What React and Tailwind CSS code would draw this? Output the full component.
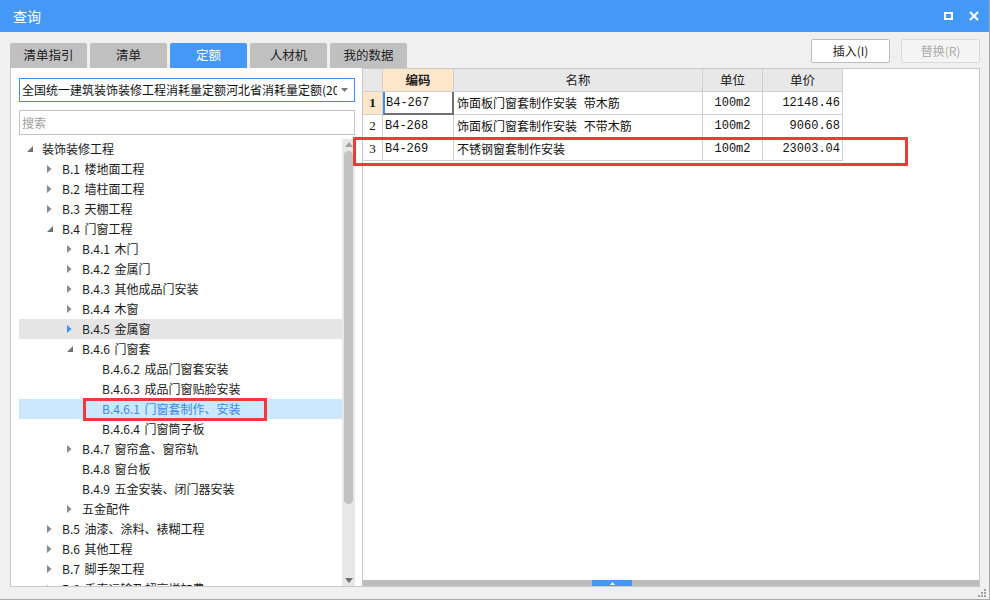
import React from 'react';

const cjk = { fontFamily: '"Noto Sans CJK SC", "Microsoft YaHei", sans-serif' };
const mono = { fontFamily: '"Liberation Mono", monospace' };

const tabs = ['清单指引', '清单', '定额', '人材机', '我的数据'];

// level, label, state: 'c' collapsed, 'e' expanded, '' leaf
const tree = [
  [0, '装饰装修工程', 'e'],
  [1, 'B.1 楼地面工程', 'c'],
  [1, 'B.2 墙柱面工程', 'c'],
  [1, 'B.3 天棚工程', 'c'],
  [1, 'B.4 门窗工程', 'e'],
  [2, 'B.4.1 木门', 'c'],
  [2, 'B.4.2 金属门', 'c'],
  [2, 'B.4.3 其他成品门安装', 'c'],
  [2, 'B.4.4 木窗', 'c'],
  [2, 'B.4.5 金属窗', 'c', 'hover'],
  [2, 'B.4.6 门窗套', 'e'],
  [3, 'B.4.6.2 成品门窗套安装', ''],
  [3, 'B.4.6.3 成品门窗贴脸安装', ''],
  [3, 'B.4.6.1 门窗套制作、安装', '', 'selected'],
  [3, 'B.4.6.4 门窗筒子板', ''],
  [2, 'B.4.7 窗帘盒、窗帘轨', 'c'],
  [2, 'B.4.8 窗台板', ''],
  [2, 'B.4.9 五金安装、闭门器安装', ''],
  [2, '五金配件', 'c'],
  [1, 'B.5 油漆、涂料、裱糊工程', 'c'],
  [1, 'B.6 其他工程', 'c'],
  [1, 'B.7 脚手架工程', 'c'],
  [1, 'B.8 垂直运输及超高增加费', 'c'],
];

const rows = [
  ['B4-267', '饰面板门窗套制作安装 带木筋', '100m2', '12148.46'],
  ['B4-268', '饰面板门窗套制作安装 不带木筋', '100m2', '9060.68'],
  ['B4-269', '不锈钢窗套制作安装', '100m2', '23003.04'],
];

const Arrow = ({ state, hover }) => {
  if (state === 'c')
    return (
      <svg width="5" height="8" viewBox="0 0 5 8">
        <path d="M0 0 L4.5 4 L0 8 Z" fill={hover ? '#3d8ff0' : '#8a8a8a'} />
      </svg>
    );
  if (state === 'e')
    return (
      <svg width="6" height="6" viewBox="0 0 6 6">
        <path d="M6 0 L6 6 L0 6 Z" fill="#707070" />
      </svg>
    );
  return null;
};

export default function App() {
  return (
    <div className="relative w-[990px] h-[600px] bg-[#f0f0f0] border-r border-b border-[#a8a8a8] flex flex-col overflow-hidden" style={cjk}>
      {/* title bar */}
      <div className="h-[32px] bg-[#4499f8] flex items-center justify-between pl-[13px] pr-[10px] shrink-0">
        <span className="text-white text-[14px]">查询</span>
        <div className="flex items-center gap-[16px]">
          <div className="w-[9px] h-[8px] border-2 border-white" />
          <svg width="10" height="10" viewBox="0 0 10 10">
            <path d="M1 1 L9 9 M9 1 L1 9" stroke="#fff" strokeWidth="2.2" />
          </svg>
        </div>
      </div>

      <div className="flex flex-col pl-[10px] pr-[9px] pt-[7px]">
        {/* tabs + buttons */}
        <div className="flex justify-between h-[29px]">
          <div className="flex gap-[3px] self-end">
            {tabs.map((t) => (
              <div
                key={t}
                className={
                  t === '定额'
                    ? 'w-[77px] h-[25px] flex items-center justify-center rounded-t-[2px] text-[12.5px] bg-[#4499f8] text-white'
                    : 'w-[77px] h-[25px] flex items-center justify-center rounded-t-[2px] text-[12.5px] bg-[#c0c0c0] text-[#222]'
                }
              >
                {t}
              </div>
            ))}
          </div>
          <div className="flex gap-[11px] self-start">
            <div className="w-[79px] h-[24px] bg-white border border-[#bdbdbd] rounded-[2px] flex items-center justify-center text-[12px] text-[#222]">
              插入(I)
            </div>
            <div className="w-[79px] h-[24px] bg-[#f4f4f4] border border-[#dadada] rounded-[2px] flex items-center justify-center text-[12px] text-[#aaaaaa]">
              替换(R)
            </div>
          </div>
        </div>

        {/* content */}
        <div className="flex h-[519px]">
          {/* left panel */}
          <div className="w-[352px] bg-white border-l border-b border-[#c8c8c8] flex flex-col pl-[8px] pr-[7px] pt-[10px]">
            <div className="h-[24px] border border-[#3f8fe9] flex items-center justify-between pl-[2px] pr-[6px]">
              <span className="text-[12px] text-[#111] whitespace-nowrap overflow-hidden w-[315px]">
                全国统一建筑装饰装修工程消耗量定额河北省消耗量定额(2016)
              </span>
              <svg width="7" height="4" viewBox="0 0 7 4">
                <path d="M0 0 L7 0 L3.5 4 Z" fill="#777" />
              </svg>
            </div>
            <div className="mt-[8px] h-[25px] border border-[#c4c4c4] flex items-center pl-[2px] text-[12px] text-[#a0a0a0]">
              搜索
            </div>
            <div className="mt-[4px] flex flex-1 min-h-0">
              <div className="flex-1 overflow-hidden">
                {tree.map(([lvl, label, state, mode]) => (
                  <div
                    key={label}
                    className={
                      mode === 'hover'
                        ? 'h-[20px] flex items-center bg-[#e5e5e5]'
                        : mode === 'selected'
                        ? 'h-[20px] flex items-center bg-[#cce8ff]'
                        : 'h-[20px] flex items-center'
                    }
                    style={{ paddingLeft: 3 + lvl * 20 }}
                  >
                    <div className="w-[20px] h-[20px] flex items-center pl-[5px] shrink-0">
                      <Arrow state={state} hover={mode === 'hover'} />
                    </div>
                    <span
                      className={
                        mode === 'selected'
                          ? 'text-[12px] whitespace-nowrap [word-spacing:2px] text-[#3d88e6]'
                          : 'text-[12px] whitespace-nowrap [word-spacing:2px] text-[#1a1a1a]'
                      }
                    >
                      {label}
                    </span>
                  </div>
                ))}
              </div>
              {/* vertical scrollbar */}
              <div className="w-[13px] bg-[#e8e8e8] flex flex-col items-center">
                <svg className="mt-[3px]" width="8" height="5" viewBox="0 0 8 5">
                  <path d="M0 5 L4 0 L8 5 Z" fill="#a0a0a0" />
                </svg>
                <div className="mt-[4px] w-[9px] h-[353px] rounded-full bg-[#c2c2c2]" />
                <div className="flex-1" />
                <svg className="mb-[3px]" width="8" height="5" viewBox="0 0 8 5">
                  <path d="M0 0 L8 0 L4 5 Z" fill="#707070" />
                </svg>
              </div>
            </div>
          </div>

          {/* right panel */}
          <div className="flex-1 bg-white border border-[#c8c8c8] flex flex-col">
            <div className="flex-1">
              <div className="flex h-[23px] text-[12.5px] text-[#222]">
                <div className="w-[20px] bg-[#e8e8e8] border-r border-b border-[#d0d0d0]" />
                <div className="w-[71px] bg-[#fde6c9] border-r border-b border-[#d0d0d0] flex items-center justify-center font-bold">编码</div>
                <div className="w-[249px] bg-[#e8e8e8] border-r border-b border-[#d0d0d0] flex items-center justify-center">名称</div>
                <div className="w-[60px] bg-[#e8e8e8] border-r border-b border-[#d0d0d0] flex items-center justify-center">单位</div>
                <div className="w-[80px] bg-[#e8e8e8] border-r border-b border-[#d0d0d0] flex items-center justify-center">单价</div>
              </div>
              {rows.map(([code, name, unit, price], i) => (
                <div key={code} className="flex h-[23px] text-[12px] text-[#111]">
                  <div
                    className={
                      i === 0
                        ? 'w-[20px] bg-[#fde6c9] border-r border-b border-[#d0d0d0] flex items-center justify-center font-bold text-[13px]'
                        : 'w-[20px] bg-white border-r border-b border-[#d0d0d0] flex items-center justify-center text-[13px]'
                    }
                    style={{ fontFamily: '"Liberation Serif", serif' }}
                  >
                    {i + 1}
                  </div>
                  <div
                    className={
                      i === 0
                        ? 'w-[71px] border-l-2 border-l-[#3d8ff0] border-r-2 border-r-[#707070] border-b-2 border-b-[#707070] flex items-center pl-[1px]'
                        : 'w-[71px] border-r border-b border-[#d0d0d0] flex items-center pl-[2px]'
                    }
                    style={mono}
                  >
                    {code}
                  </div>
                  <div className="w-[249px] border-r border-b border-[#d0d0d0] flex items-center pl-[3px] [word-spacing:4px]">{name}</div>
                  <div className="w-[60px] border-r border-b border-[#d0d0d0] flex items-center justify-center" style={mono}>
                    {unit}
                  </div>
                  <div className="w-[80px] border-r border-b border-[#d0d0d0] flex items-center justify-end pr-[2px]" style={mono}>
                    {price}
                  </div>
                </div>
              ))}
            </div>
            {/* horizontal splitter bar */}
            <div className="h-[6px] bg-[#bdbdbd] flex">
              <div className="w-[229px]" />
              <div className="w-[40px] bg-[#4499f8] flex items-center justify-center">
                <svg width="5" height="3" viewBox="0 0 5 3">
                  <path d="M0 3 L2.5 0 L5 3 Z" fill="#fff" />
                </svg>
              </div>
            </div>
          </div>
        </div>
      </div>

      {/* resize grip */}
      <div className="absolute right-[3px] bottom-[2px] grid grid-cols-3 gap-[1px] w-[8px] h-[8px]">
        <div />
        <div />
        <div className="bg-[#a0a0a0]" />
        <div />
        <div className="bg-[#a0a0a0]" />
        <div className="bg-[#a0a0a0]" />
        <div className="bg-[#a0a0a0]" />
        <div className="bg-[#a0a0a0]" />
        <div className="bg-[#a0a0a0]" />
      </div>

      {/* red annotation boxes */}
      <div className="absolute left-[353px] top-[137px] w-[555px] h-[29px] border-[3px] border-[#f03a3a]" />
      <div className="absolute left-[83px] top-[398px] w-[184px] h-[23px] border-[3px] border-[#f03a3a]" />
    </div>
  );
}
